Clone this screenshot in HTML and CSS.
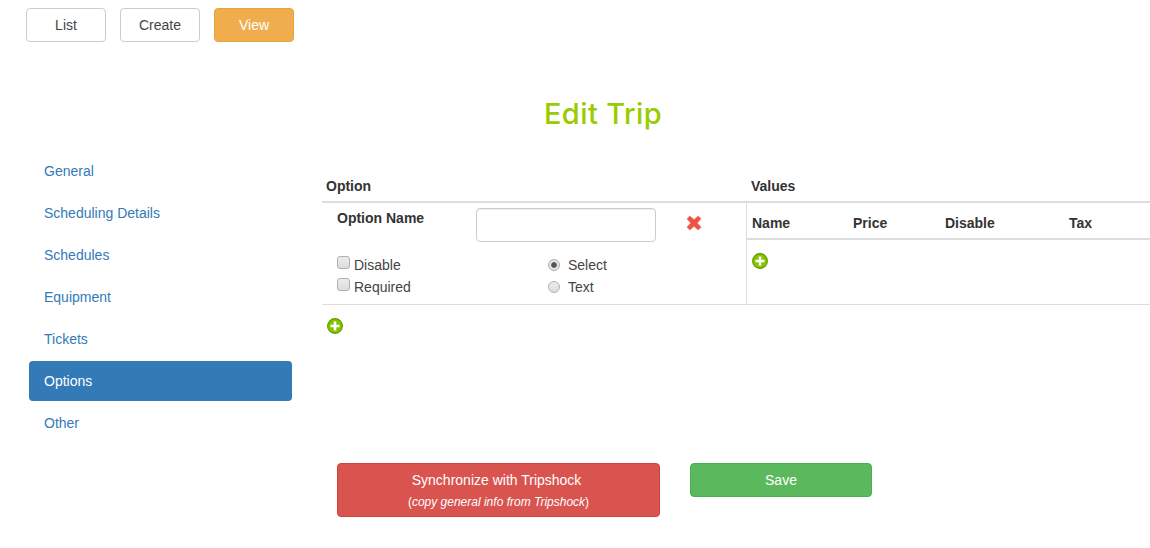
FILE: index.html
```html
<!DOCTYPE html>
<html lang="en">
<head>
<meta charset="utf-8">
<title>Edit Trip</title>
<link rel="stylesheet" href="styles.css">
</head>
<body>
<nav class="topbar">
  <a class="btn btn-default">List</a>
  <a class="btn btn-default">Create</a>
  <a class="btn btn-warning">View</a>
</nav>
<h1 class="title">Edit Trip</h1>
<div class="layout">
  <ul class="pills">
    <li class="pill">General</li>
    <li class="pill">Scheduling Details</li>
    <li class="pill">Schedules</li>
    <li class="pill">Equipment</li>
    <li class="pill">Tickets</li>
    <li class="pill active">Options</li>
    <li class="pill">Other</li>
  </ul>
  <main class="main">
    <div class="options">
      <div class="head head-option">Option</div>
      <div class="head head-values">Values</div>
      <section class="option-cell">
        <div class="name-row">
          <label class="name-label">Option Name</label>
          <input class="text-input" type="text">
          <svg class="remove" width="16" height="16" viewBox="0 0 16 16" aria-hidden="true">
            <path d="M3.8 1 8 4.6 12.2 1 15 3.8 11.4 8 15 12.2 12.2 15 8 11.4 3.8 15 1 12.2 4.6 8 1 3.8Z" fill="#ee5240" stroke="#f28577" stroke-width="1" stroke-linejoin="round"/>
          </svg>
        </div>
        <div class="flags">
          <div class="flag-col">
            <label class="check"><input type="checkbox"><span>Disable</span></label>
            <label class="check"><input type="checkbox"><span>Required</span></label>
          </div>
          <div class="flag-col">
            <label class="radio"><input type="radio" name="kind" checked><span>Select</span></label>
            <label class="radio"><input type="radio" name="kind"><span>Text</span></label>
          </div>
        </div>
      </section>
      <section class="values-cell">
        <div class="values-head">
          <span class="col-name">Name</span>
          <span class="col-price">Price</span>
          <span class="col-disable">Disable</span>
          <span class="col-tax">Tax</span>
        </div>
        <svg class="add add-value" width="16" height="16" viewBox="0 0 16 16" aria-hidden="true">
          <circle cx="8" cy="8" r="7.4" fill="#86c400" stroke="#5f9a00" stroke-width="1.1"/>
          <path d="M8 3.5v9M3.5 8h9" stroke="#fff" stroke-width="2.6"/>
        </svg>
      </section>
    </div>
    <svg class="add add-option" width="16" height="16" viewBox="0 0 16 16" aria-hidden="true">
      <circle cx="8" cy="8" r="7.4" fill="#86c400" stroke="#5f9a00" stroke-width="1.1"/>
      <path d="M8 3.5v9M3.5 8h9" stroke="#fff" stroke-width="2.6"/>
    </svg>
  </main>
</div>
<div class="actions">
  <a class="btn btn-danger sync">Synchronize with Tripshock&nbsp;<small class="sync-note">(<em>copy general info from Tripshock</em>)</small></a>
  <a class="btn btn-success save">Save</a>
</div>
</body>
</html>
```
FILE: styles.css
```css
* { box-sizing: border-box; }
html, body { margin: 0; padding: 0; }
body {
  font-family: "Liberation Sans", Arial, sans-serif;
  font-size: 14px;
  line-height: 20px;
  color: #333;
  background: #fff;
  height: 548px;
  overflow: hidden;
}
.topbar { display: flex; gap: 14px; padding: 8px 0 0 26px; }
.btn {
  display: block;
  width: 80px;
  height: 34px;
  padding: 6px 12px;
  border: 1px solid #ccc;
  border-radius: 4px;
  text-align: center;
  font-size: 14px;
  line-height: 20px;
}
.btn-default { color: #444; background: #fff; }
.btn-warning { color: #fff; background: #f0ad4e; border-color: #eea236; font-weight: 500; }
.btn-danger { color: #fff; background: #d9534f; border-color: #d43f3a; }
.btn-success { color: #fff; background: #5cb85c; border-color: #4cae4c; }
.title {
  margin: 56px 0 0;
  padding-left: 56px;
  text-align: center;
  font-family: Inter, sans-serif;
  font-size: 29px;
  line-height: 32px;
  letter-spacing: .4px;
  font-weight: 500;
  color: #99cc00;
}
.layout { display: flex; margin-top: 21px; padding-left: 29px; }
.pills { list-style: none; margin: 0; padding: 0; width: 263px; flex: none; }
.pill {
  height: 40px;
  padding: 10px 15px;
  margin-bottom: 2px;
  border-radius: 4px;
  color: #337ab7;
}
.pill.active { background: #337ab7; color: #fff; }
.main { flex: 1; margin-left: 30px; padding-top: 25px; }
.options {
  display: grid;
  grid-template-columns: 424px 404px;
  grid-template-rows: 27px 101px;
  border-bottom: 1px solid #ddd;
  height: 129px;
}
.head {
  font-weight: 700;
  border-bottom: 2px solid #ddd;
  line-height: 20px;
}
.head-option { padding-left: 4px; }
.head-values { padding-left: 5px; }
.option-cell { padding: 5px 0 0 15px; }
.name-row { display: flex; align-items: flex-start; }
.name-label { width: 139px; font-weight: 700; line-height: 20px; }
.text-input {
  width: 180px;
  height: 34px;
  border: 1px solid #ccc;
  border-radius: 4px;
  box-shadow: inset 0 1px 1px rgba(0,0,0,.075);
  background: #fff;
}
.remove { margin: 7px 0 0 30px; }
.flags { display: flex; margin-top: 13px; }
.flag-col { display: flex; flex-direction: column; gap: 2px; }
.flag-col:first-child { width: 211px; }
.check, .radio { display: flex; height: 20px; line-height: 20px; color: #444; }
.check input, .radio input {
  appearance: none;
  margin: 0;
  border: 1px solid #b0b0b0;
  background: linear-gradient(#ededed, #dcdcdc);
}
.check input { width: 13px; height: 13px; border-radius: 3px; margin-top: 1px; }
.check span { margin-left: 4px; }
.radio input { width: 12px; height: 12px; border-radius: 50%; margin-top: 4px; }
.radio input:checked {
  background: radial-gradient(circle, #555 0 2.4px, #e4e4e4 3.2px);
}
.radio span { margin-left: 8px; }
.values-cell { border-left: 1px solid #ddd; }
.values-head {
  display: flex;
  height: 37px;
  padding-top: 10px;
  border-bottom: 2px solid #ddd;
  font-weight: 700;
}
.col-name { margin-left: 5px; width: 101px; }
.col-price { width: 92px; }
.col-disable { width: 124px; }
.add { display: block; }
.add-value { margin: 13px 0 0 5px; }
.add-option { margin: 13px 0 0 5px; }
.actions { display: flex; align-items: flex-start; gap: 30px; padding-left: 337px; margin-top: 18px; }
.sync { width: 323px; height: 54px; }
.sync-note { display: block; font-size: 12px; line-height: 20px; margin-top: 2px; }
.save { width: 182px; }
```
